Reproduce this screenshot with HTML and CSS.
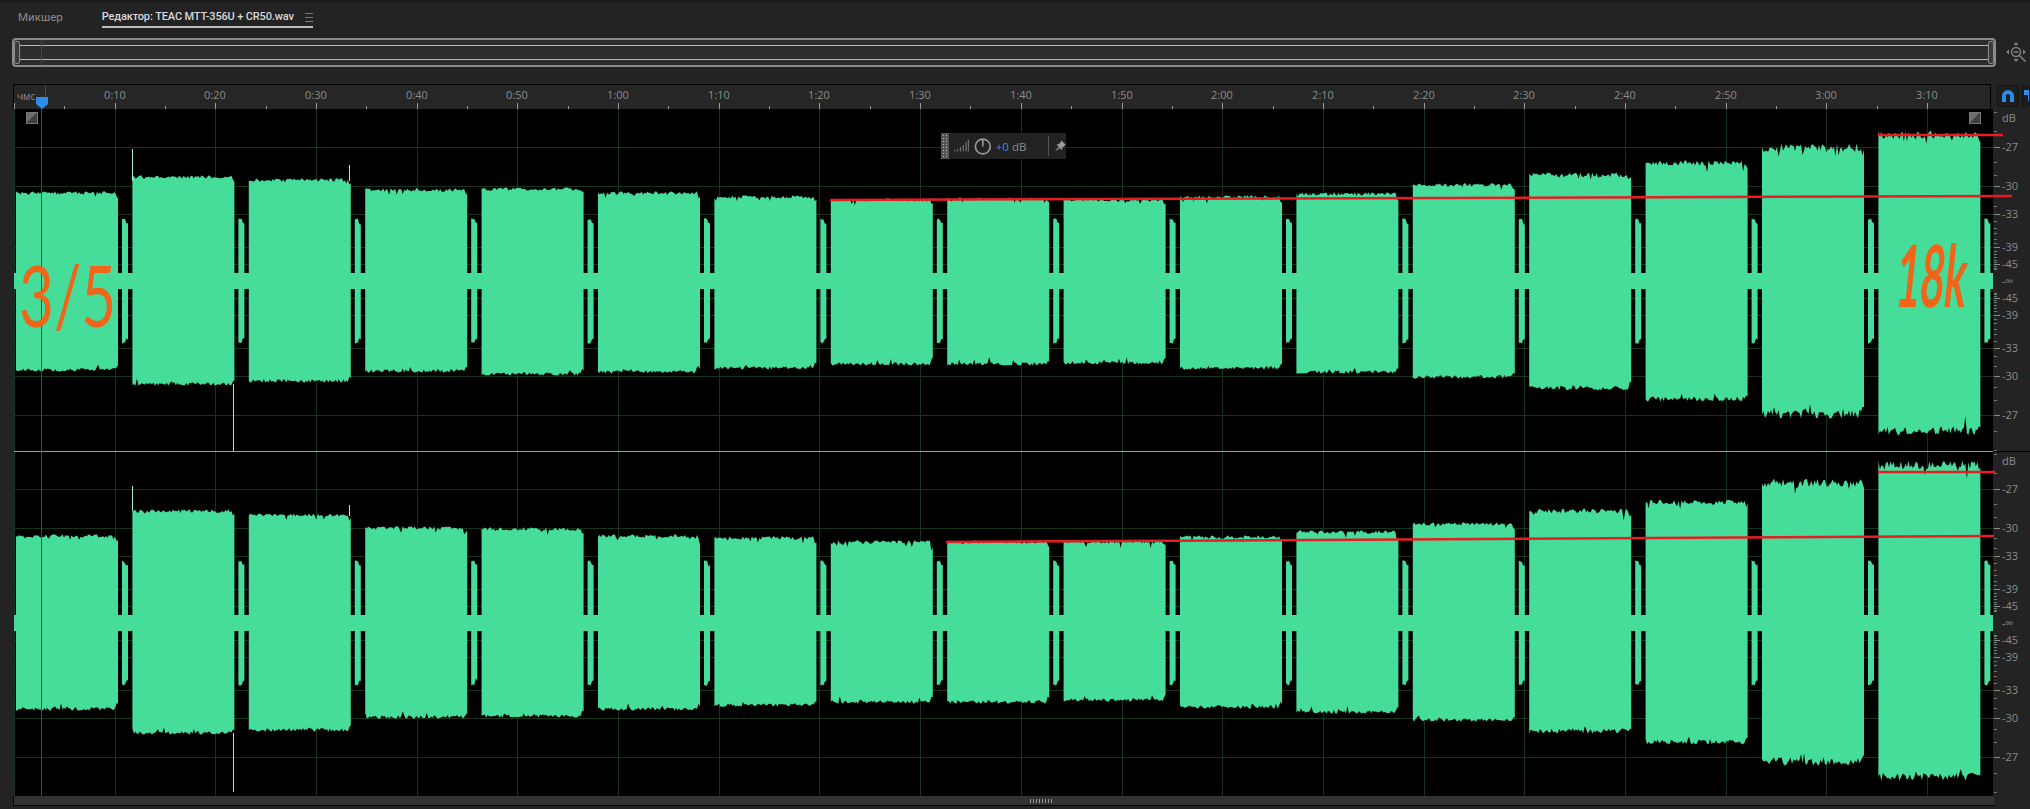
FILE: index.html
```html
<!DOCTYPE html>
<html>
  <head>
    <title>Редактор: TEAC MTT-356U + CR50.wav</title>
    <link rel="stylesheet" href="styles.css">
  </head>
  <body>
    <div class="tabs">
      <span class="tab">Микшер</span>
      <span class="tab tab-active">
        Редактор: TEAC MTT-356U + CR50.wav
        <span class="tab-menu"></span>
      </span>
    </div>

    <div class="overview-row">
      <div class="overview">
        <span class="overview-line"></span>
        <span class="overview-line"></span>
        <span class="overview-handle handle-left"></span>
        <span class="overview-handle handle-right"></span>
        <span class="overview-head"></span>
      </div>
      <svg class="zoom-icon" width="24" height="24" viewBox="0 0 24 24">
        <circle cx="11" cy="11" r="4.500" fill="none" stroke="#808080" stroke-width="1.500"/>
        <path d="M8.500 11h5M14.500 14.500l6 6" fill="none" stroke="#808080" stroke-width="1.500"/>
        <path d="M11 1l2.500 3h-5zM11 21l2.500-3h-5zM1 11l3-2.500v5zM21 11l-3-2.500v5z" fill="#808080"/>
      </svg>
    </div>

    <div class="ruler-row">
      <div class="ruler" id="ruler">
        <span class="ruler-unit">чмс</span>
        <span class="playhead-line"></span>
        <svg class="playhead" width="12" height="12" viewBox="0 0 12 12">
          <path d="M0 0h12v7l-6 5-6-5z" fill="#2b8cec"/>
        </svg>
      </div>
      <div class="ruler-btns">
        <button class="snap-btn">
          <svg width="14" height="14" viewBox="0 0 14 14">
            <path d="M1 13V7a6 6 0 0 1 12 0v6H9V7a2 2 0 0 0-4 0v6z" fill="#2b8cec"/>
          </svg>
        </button>
        <button class="snap-btn snap-btn-cut">
          <svg width="14" height="14" viewBox="0 0 14 14">
            <path d="M1 1h12v5H9v6H5V6H1z" fill="#2b8cec"/>
          </svg>
        </button>
      </div>
    </div>

    <div class="tracks">
      <svg id="wave" class="wave" width="2017" height="687" viewBox="13 109 2017 687"></svg>

      <span class="corner corner-left"></span>
      <span class="corner corner-right"></span>

      <div class="hud">
        <span class="hud-grip"></span>
        <svg width="16" height="14" viewBox="0 0 16 14">
          <path d="M1 13v-2M4 13v-3M7 13V8M10 13V6M13 13V3M15.500 13V0" stroke="#777" stroke-width="1.200"/>
        </svg>
        <svg class="hud-knob" width="19" height="19" viewBox="0 0 19 19">
          <circle cx="9.500" cy="9.500" r="8" fill="none" stroke="#9a9a9a" stroke-width="1.800"/>
          <path d="M9.500 1.500v8" stroke="#9a9a9a" stroke-width="1.800"/>
        </svg>
        <span class="hud-value"><b>+0</b> dB</span>
        <span class="hud-sep"></span>
        <svg width="12" height="12" viewBox="0 0 12 12">
          <path d="M7 0l5 5-1.500.5L8 8l-.5 2.500L1.500 4.500 4 4l2.500-2.500zM3.500 7L0 12l5-3.500z" fill="#9a9a9a"/>
        </svg>
      </div>

      <span class="note note-left">3/5</span>
      <span class="note note-right">18k</span>
    </div>

    <div class="scrollbar"><span class="scroll-grip"></span></div>

    <script src="wave.js"></script>
  </body>
</html>
```

FILE: styles.css
```css
html,
body {
  height: 100%;
}

body {
  margin: 0;
  width: 2030px;
  height: 809px;
  overflow: hidden;
  background-color: #232323;
  font-family: "Open Sans", Arial, sans-serif;
  color: #8c8c8c;
  border-top: 3px solid #1b1b1b;
  box-sizing: border-box;
}

.tabs {
  display: flex;
  height: 35px;
  padding-left: 18px;
  gap: 39px;
  font-family: Roboto, Arial, sans-serif;
  font-size: 11px;
  letter-spacing: -0.15px;
}

.tab {
  padding-top: 6px;
  height: 18px;
  line-height: 16px;
  font-size: 11.5px;
  letter-spacing: 0;
}

.tab-active {
  display: flex;
  gap: 11px;
  height: 17px;
  color: #d8d8d8;
  font-size: 11px;
  font-weight: 500;
  letter-spacing: -0.15px;
  border-bottom: 2px solid #bdbdbd;
}

.tab-menu {
  width: 8px;
  height: 7px;
  margin-top: 4px;
  border-top: 1px solid #777;
  border-bottom: 1px solid #777;
  position: relative;
}

.tab-menu::after {
  content: "";
  position: absolute;
  left: 0;
  right: 0;
  top: 3px;
  border-top: 1px solid #777;
}

.overview-row {
  display: flex;
  align-items: center;
  height: 29px;
  padding-left: 12px;
  gap: 9px;
}

.overview {
  position: relative;
  box-sizing: border-box;
  width: 1984px;
  height: 29px;
  border: 2px solid #8a8a8a;
  border-radius: 4px;
  background-color: #2d2d2d;
  display: flex;
  flex-direction: column;
  gap: 13px;
  padding-top: 5px;
}

.overview-line {
  display: block;
  height: 1px;
  background-color: #7fd9ab;
}

.overview-handle {
  position: absolute;
  top: 1px;
  bottom: 1px;
  width: 4px;
  border: 1px solid #8a8a8a;
  border-radius: 2px;
  background-color: #3a3a3a;
}

.handle-left {
  left: 0;
}

.handle-right {
  right: 0;
}

.overview-head {
  position: absolute;
  left: 27px;
  top: 0;
  bottom: 0;
  width: 1px;
  background-color: #8c2b2b;
}

.ruler-row {
  display: flex;
  margin-top: 17px;
  height: 25px;
  padding-left: 13px;
  gap: 6px;
}

.ruler {
  position: relative;
  width: 1980px;
  box-sizing: border-box;
  background-color: #262626;
  border-top: 1px solid #000;
  border-left: 1px solid #000;
  border-right: 1px solid #000;
}

.ruler-unit {
  position: absolute;
  left: 3px;
  top: 4px;
  font-size: 10px;
  line-height: 14px;
}

.ruler-label {
  position: absolute;
  top: 2px;
  font-size: 11px;
  line-height: 16px;
  transform: translateX(-50%);
}

.ruler-tick {
  position: absolute;
  bottom: 0;
  width: 1px;
  height: 3px;
  background-color: #9a9a9a;
}

.ruler-tick-major {
  height: 6px;
}

.playhead-line {
  position: absolute;
  left: 31px;
  top: 0;
  height: 13px;
  width: 1px;
  background-color: #2d4f78;
}

.playhead {
  position: absolute;
  left: 22px;
  top: 12px;
}

.ruler-btns {
  display: flex;
  gap: 3px;
}

.snap-btn {
  width: 22px;
  height: 22px;
  margin-top: 1px;
  padding: 0;
  border: 1px solid #161616;
  border-radius: 2px;
  background-color: #1d1d1d;
}

.snap-btn svg {
  display: block;
  margin: 0 auto;
}

.snap-btn-cut {
  width: 8px;
  overflow: hidden;
}

.tracks {
  position: relative;
  height: 687px;
  padding-left: 13px;
}

.wave {
  display: block;
}

.axis-label {
  font-family: "Open Sans", Arial, sans-serif;
  font-size: 11px;
  fill: #8c8c8c;
}

.corner {
  position: absolute;
  top: 3px;
  width: 10px;
  height: 10px;
  border: 1px solid #777;
  background: linear-gradient(135deg, #6d6d6d 50%, #3f3f3f 50%);
}

.corner-left {
  left: 26px;
}

.corner-right {
  left: 1969px;
}

.hud {
  position: absolute;
  left: 941px;
  top: 24px;
  width: 125px;
  height: 26px;
  background-color: #222;
  display: flex;
  align-items: center;
  gap: 4px;
}

.hud-grip {
  width: 9px;
  height: 26px;
  margin-right: 1px;
  background-color: #555;
  background-image: radial-gradient(#bbb 0.6px, transparent 0.8px);
  background-size: 3px 3px;
  background-position: 1px 1px;
}

.hud-knob {
  margin-left: 1px;
}

.hud-value {
  width: 52px;
  margin-left: 0;
  font-size: 11.5px;
}

.hud-value b {
  font-weight: 400;
  color: #3d8fe0;
}

.hud-sep {
  width: 1px;
  height: 20px;
  margin-right: 2px;
  background-color: #555;
}

.note {
  position: absolute;
  font-family: Lato, "Open Sans", sans-serif;
  color: #f0651a;
  line-height: 1;
  transform-origin: left top;
}

.note-left {
  left: 19px;
  top: 142px;
  font-size: 86px;
  transform: scaleX(0.7);
}

.note-right {
  left: 1902px;
  top: 122px;
  font-size: 86px;
  font-weight: 700;
  transform: skewX(-6deg) scaleX(0.48);
}

.scrollbar {
  box-sizing: border-box;
  display: flex;
  justify-content: center;
  align-items: center;
  margin-left: 13px;
  padding-left: 74px;
  width: 1981px;
  height: 10px;
  background-color: #333;
  border-left: 1px solid #000;
  border-bottom: 1px solid #000;
}

.scroll-grip {
  width: 24px;
  height: 4px;
  background-image: radial-gradient(#bbb 0.7px, transparent 0.9px);
  background-size: 3px 2px;
}
```

FILE: wave.js
```js
// Small seeded random so the waveform edges are the same every load
let seed = 42;
function rnd() {
  seed = (seed * 16807) % 2147483647;
  return seed / 2147483647;
}

const TRACK_RIGHT = 1993;
const TOP = 109;
const BOTTOM = 796;

// top and bottom of every tone burst, for both channels
const tracks = [
  {
    center: 281,
    start: 109,
    end: 451,
    blocks: [
      [193, 370], [177, 384], [180, 381], [190, 371], [189, 374], [193, 372],
      [197, 368], [200, 364], [199, 364], [200, 363], [197, 368], [194, 372],
      [185, 377], [175, 388], [163, 399], [148, 414], [135, 431],
    ],
    spikes: [[132.5, 149, 181], [233.5, 384, 451], [349.5, 165, 181]],
    marks: [[830, 200, 2012, 196], [1878, 135, 2003, 135]],
  },
  {
    center: 623,
    start: 452,
    end: 796,
    blocks: [
      [536, 709], [511, 733], [515, 730], [528, 717], [529, 716], [536, 709],
      [538, 705], [542, 702], [542, 702], [542, 700], [537, 707], [532, 712],
      [524, 720], [511, 731], [502, 742], [483, 761], [465, 777],
    ],
    spikes: [[132.5, 486, 511], [233.5, 733, 792], [349.5, 505, 516]],
    marks: [[946, 542, 1994, 536], [1878, 472, 1995, 472]],
  },
];

const dbLabels = [27, 30, 33, 39, 45];

const svg = document.getElementById("wave");
const ruler = document.getElementById("ruler");
let out = "";

function dbOffset(db) {
  return 3000 * Math.pow(10, db / 20);
}

function line(x1, y1, x2, y2, color, width) {
  out += `<line x1="${x1}" y1="${y1}" x2="${x2}" y2="${y2}" stroke="${color}" stroke-width="${width || 1}"/>`;
}

function label(x, y, text) {
  out += `<text class="axis-label" x="${x}" y="${y}">${text}</text>`;
}

// outline of one burst with a noisy top and bottom edge
function blockPath(x, w, top, bottom, rough) {
  let upper = `M${x} ${top + 4}`;
  let lower = "";
  for (let i = 0; i <= w; i += 1.5) {
    let up = rnd() * rough;
    let down = rnd() * rough;
    if (rnd() < 0.06) up += rnd() * rough * 1.5;
    if (rnd() < 0.06) down += rnd() * rough * 1.5;
    const fall = i > w - 3 ? 4 : 0;
    upper += `L${x + i} ${(top - rough / 2 + up + fall).toFixed(1)}`;
    lower = `L${x + i} ${(bottom + rough / 2 - down - fall).toFixed(1)}` + lower;
  }
  return upper + lower + "Z";
}

// ruler labels and the vertical grid
for (let k = 0; k <= 38; k++) {
  const x = 13.8 + 50.35 * k;
  if (x > TRACK_RIGHT) break;
  const tick = document.createElement("span");
  tick.className = k % 2 === 0 ? "ruler-tick ruler-tick-major" : "ruler-tick";
  tick.style.left = Math.round(x - 14) + "px";
  ruler.appendChild(tick);
  if (k % 2 === 0 && k > 0) {
    const sec = k * 5;
    const text = document.createElement("span");
    text.className = "ruler-label";
    text.style.left = Math.round(x - 14) + "px";
    text.textContent = Math.floor(sec / 60) + ":" + String(sec % 60).padStart(2, "0");
    ruler.appendChild(text);
  }
}

out += `<rect x="14" y="${TOP}" width="${TRACK_RIGHT - 14}" height="${BOTTOM - TOP}" fill="#000"/>`;

for (let k = 0; k < 20; k++) {
  const x = Math.round(13.8 + 100.7 * k) + 0.5;
  line(x, TOP, x, BOTTOM, "#17331a");
}

for (const t of tracks) {
  // horizontal grid at each dB label
  for (const db of dbLabels) {
    const off = Math.round(dbOffset(-db));
    line(14, t.center - off + 0.5, TRACK_RIGHT, t.center - off + 0.5, "#17331a");
    line(14, t.center + off + 0.5, TRACK_RIGHT, t.center + off + 0.5, "#17331a");
  }

  // low level band through the whole track
  let d = `M14 ${t.center - 8}H${TRACK_RIGHT}V${t.center + 8}H14Z`;

  t.blocks.forEach(function (b, i) {
    const x = 16 + 116.4 * i;
    const rough = i >= 15 ? 9 : i >= 13 ? 5 : 3.5;
    d += blockPath(+x.toFixed(1), 102, b[0], b[1], rough);
    d += blockPath(+(x + 106).toFixed(1), 6, t.center - 62, t.center + 62, 1.5);
  });
  out += `<path d="${d}" fill="#46dc9a"/>`;

  for (const s of t.spikes) {
    line(s[0], s[1], s[0], s[2], "#a5ecc9");
  }
}

// axis column
out += `<rect x="1994" y="${TOP}" width="36" height="${BOTTOM - TOP}" fill="#232323"/>`;

// channel divider
line(14, 451.5, TRACK_RIGHT, 451.5, "#9a9a9a");
line(TRACK_RIGHT, 451.5, 2030, 451.5, "#000");

for (const t of tracks) {
  label(2002, t.start + 13, "dB");
  for (let db = 25; db <= 48; db++) {
    const off = Math.round(dbOffset(-db));
    const major = dbLabels.indexOf(db) >= 0;
    for (const y of [t.center - off, t.center + off]) {
      if (y < t.start + 2 || y > t.end - 1) continue;
      line(1994, y + 0.5, major ? 2000 : 1997, y + 0.5, major ? "#8c8c8c" : "#777");
    }
  }
  for (const db of dbLabels) {
    const off = Math.round(dbOffset(-db));
    label(2002, t.center - off + 4, "-" + db);
    label(2002, t.center + off + 4, "-" + db);
  }
  label(2002, t.center + 4, "-∞");
}

// playhead over the waveform
line(41.5, TOP, 41.5, BOTTOM, "#b01c1c");

// hand drawn red marks
for (const t of tracks) {
  for (const m of t.marks) {
    line(m[0], m[1], m[2], m[3], "#e81c24", 2.5);
  }
}

svg.innerHTML = out;
```
